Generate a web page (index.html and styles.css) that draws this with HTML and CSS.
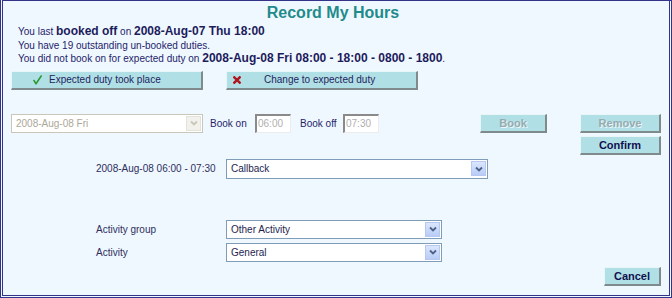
FILE: index.html
```html
<!DOCTYPE html>
<html>
<head>
<link rel="stylesheet" href="styles.css">
</head>
<body>
<div class="frame">

<!--title-->
<h1 class="title">Record My Hours</h1>

<div class="content">

<!--status lines-->
<div class="info">
	<div class="line">You last <b>booked off</b> on <b>2008-Aug-07 Thu 18:00</b></div>
	<div class="line">You have 19 outstanding un-booked duties.</div>
	<div class="line">You did not book on for expected duty on <b>2008-Aug-08 Fri 08:00 - 18:00 - 0800 - 1800</b>.</div>
</div>

<!--expected duty-->
<div class="row actions">
	<div class="btn wide">
		<span class="ico-box"><svg class="ico ok" width="9" height="10" viewBox="0 0 9 10"><path d="M1 5.5 L3 8.8 L8.2 1" fill="none" stroke="#2f9a34" stroke-width="1.6" stroke-linecap="round" stroke-linejoin="round"/></svg></span>
		<span>Expected duty took place</span>
	</div>
	<div class="btn wide">
		<span class="ico-box"><svg class="ico no" width="8" height="8" viewBox="0 0 8 8"><path d="M1.3 1.3 L6.7 6.7 M6.7 1.3 L1.3 6.7" fill="none" stroke="#b2141c" stroke-width="2.4" stroke-linecap="square"/></svg></span>
		<span>Change to expected duty</span>
	</div>
</div>

<!--booking-->
<div class="row book">
	<div class="select off day">
		<span class="val">2008-Aug-08 Fri</span>
		<span class="arrow"><svg width="8" height="6" viewBox="0 0 8 6"><path d="M1 1.5 L4 4.5 L7 1.5" fill="none" stroke="currentColor" stroke-width="1.8"/></svg></span>
	</div>
	<span class="lbl on">Book on</span>
	<div class="time">06:00</div>
	<span class="lbl off-lbl">Book off</span>
	<div class="time">07:30</div>
	<div class="btn dim book-btn">Book</div>
	<div class="btn dim side">Remove</div>
</div>
<div class="row confirm">
	<div class="btn strong side">Confirm</div>
</div>

<!--duty-->
<div class="row duty">
	<span class="lbl field">2008-Aug-08 06:00 - 07:30</span>
	<div class="select callback">
		<span class="val">Callback</span>
		<span class="arrow"><svg width="8" height="6" viewBox="0 0 8 6"><path d="M1 1.5 L4 4.5 L7 1.5" fill="none" stroke="currentColor" stroke-width="1.8"/></svg></span>
	</div>
</div>

<!--activity-->
<div class="row group">
	<span class="lbl field">Activity group</span>
	<div class="select act">
		<span class="val">Other Activity</span>
		<span class="arrow"><svg width="8" height="6" viewBox="0 0 8 6"><path d="M1 1.5 L4 4.5 L7 1.5" fill="none" stroke="currentColor" stroke-width="1.8"/></svg></span>
	</div>
</div>
<div class="row activity">
	<span class="lbl field">Activity</span>
	<div class="select act">
		<span class="val">General</span>
		<span class="arrow"><svg width="8" height="6" viewBox="0 0 8 6"><path d="M1 1.5 L4 4.5 L7 1.5" fill="none" stroke="currentColor" stroke-width="1.8"/></svg></span>
	</div>
</div>

<div class="row bottom">
	<div class="btn strong cancel">Cancel</div>
</div>

</div>
</div>
</body>
</html>
```

FILE: styles.css
```css
	body {
		margin: 0;
		font-family: "Liberation Sans", Arial, sans-serif;
		font-size: 10px;
		color: #24246a;
	}
	.frame {
		width: 672px;
		height: 298px;
		box-sizing: border-box;
		background-color: #f0f8ff;
		border: 3px double #33338a;
		border-top: 1px solid #33338a;
	}
	.content {
		padding-left: 8px;
	}
	.title {
		margin: 0;
		height: 23px;
		line-height: 23px;
		padding-right: 6px;
		text-align: center;
		font-size: 16px;
		font-weight: bold;
		color: #1f8b8b;
	}
	.info {
		padding-left: 7px;
		margin-top: 1px;
	}
	.line {
		height: 13.5px;
		line-height: 13.5px;
		white-space: nowrap;
	}
	.line b {
		font-size: 12px;
		color: #1c1c5c;
	}

	.row {
		display: flex;
		align-items: center;
		white-space: nowrap;
		height: 19px;
	}
	.actions {
		margin-top: 5px;
		gap: 23px;
	}
	.book {
		margin-top: 24px;
	}
	.confirm {
		margin-top: 3px;
		padding-left: 569px;
	}
	.duty {
		margin-top: 4px;
		height: 20px;
	}
	.group {
		margin-top: 41px;
	}
	.activity {
		margin-top: 4px;
	}
	.bottom {
		margin-top: 5px;
		padding-left: 593px;
	}

	.btn {
		box-sizing: border-box;
		height: 19px;
		background-color: #b0e0e6;
		border: 1px solid #e8f6f8;
		border-right: 2px solid #7f8a8c;
		border-bottom: 2px solid #7f8a8c;
		color: #24245e;
		display: flex;
		align-items: center;
		justify-content: center;
	}
	.btn.wide {
		width: 192px;
		justify-content: flex-start;
	}
	.ico-box {
		width: 37px;
		display: flex;
		align-items: center;
	}
	.ico.ok {
		margin-left: 21px;
	}
	.ico.no {
		margin-left: 6px;
	}
	.btn.strong {
		font-weight: bold;
		color: #101050;
		font-size: 11px;
	}
	.btn.dim {
		font-weight: bold;
		color: #97abb0;
		font-size: 11px;
		text-shadow: 1px 1px 0 #eaf6f8;
	}
	.book-btn {
		width: 67px;
		margin-left: 101px;
	}
	.side {
		width: 81px;
	}
	.dim.side {
		margin-left: 33px;
	}
	.cancel {
		width: 57px;
	}

	.select {
		box-sizing: border-box;
		height: 19px;
		background-color: #ffffff;
		border: 1px solid #7f9db9;
		display: flex;
		align-items: center;
		justify-content: space-between;
		padding: 1px;
		color: #1e1e50;
	}
	.select .val {
		padding-left: 3px;
	}
	.select .arrow {
		width: 15px;
		height: 15px;
		box-sizing: border-box;
		background: linear-gradient(#dbe6fd, #b9ccf6);
		border: 1px solid #b5c8f3;
		color: #4d6189;
		display: flex;
		align-items: center;
		justify-content: center;
	}
	.select.off {
		border-color: #c9c7ba;
		color: #aca899;
	}
	.select.off .arrow {
		background: #f2f1ec;
		border-color: #e2e1da;
		color: #c9c7ba;
	}
	.day {
		width: 192px;
	}
	.callback {
		width: 262px;
		height: 20px;
	}
	.act {
		width: 216px;
	}

	.lbl.on {
		width: 38px;
		margin-left: 7px;
	}
	.off-lbl {
		width: 36px;
		margin-left: 9px;
	}
	.time {
		box-sizing: border-box;
		width: 36px;
		height: 19px;
		background-color: #ffffff;
		border-top: 2px solid #8a8a8a;
		border-left: 2px solid #8a8a8a;
		border-right: 1px solid #ececec;
		border-bottom: 1px solid #ececec;
		color: #b0b0b0;
		padding-left: 1px;
		line-height: 15px;
	}
	.lbl.on + .time,
	.off-lbl + .time {
		margin-left: 7px;
	}
	.field {
		width: 130px;
		margin-left: 85px;
		color: #2e2e5e;
	}
```
